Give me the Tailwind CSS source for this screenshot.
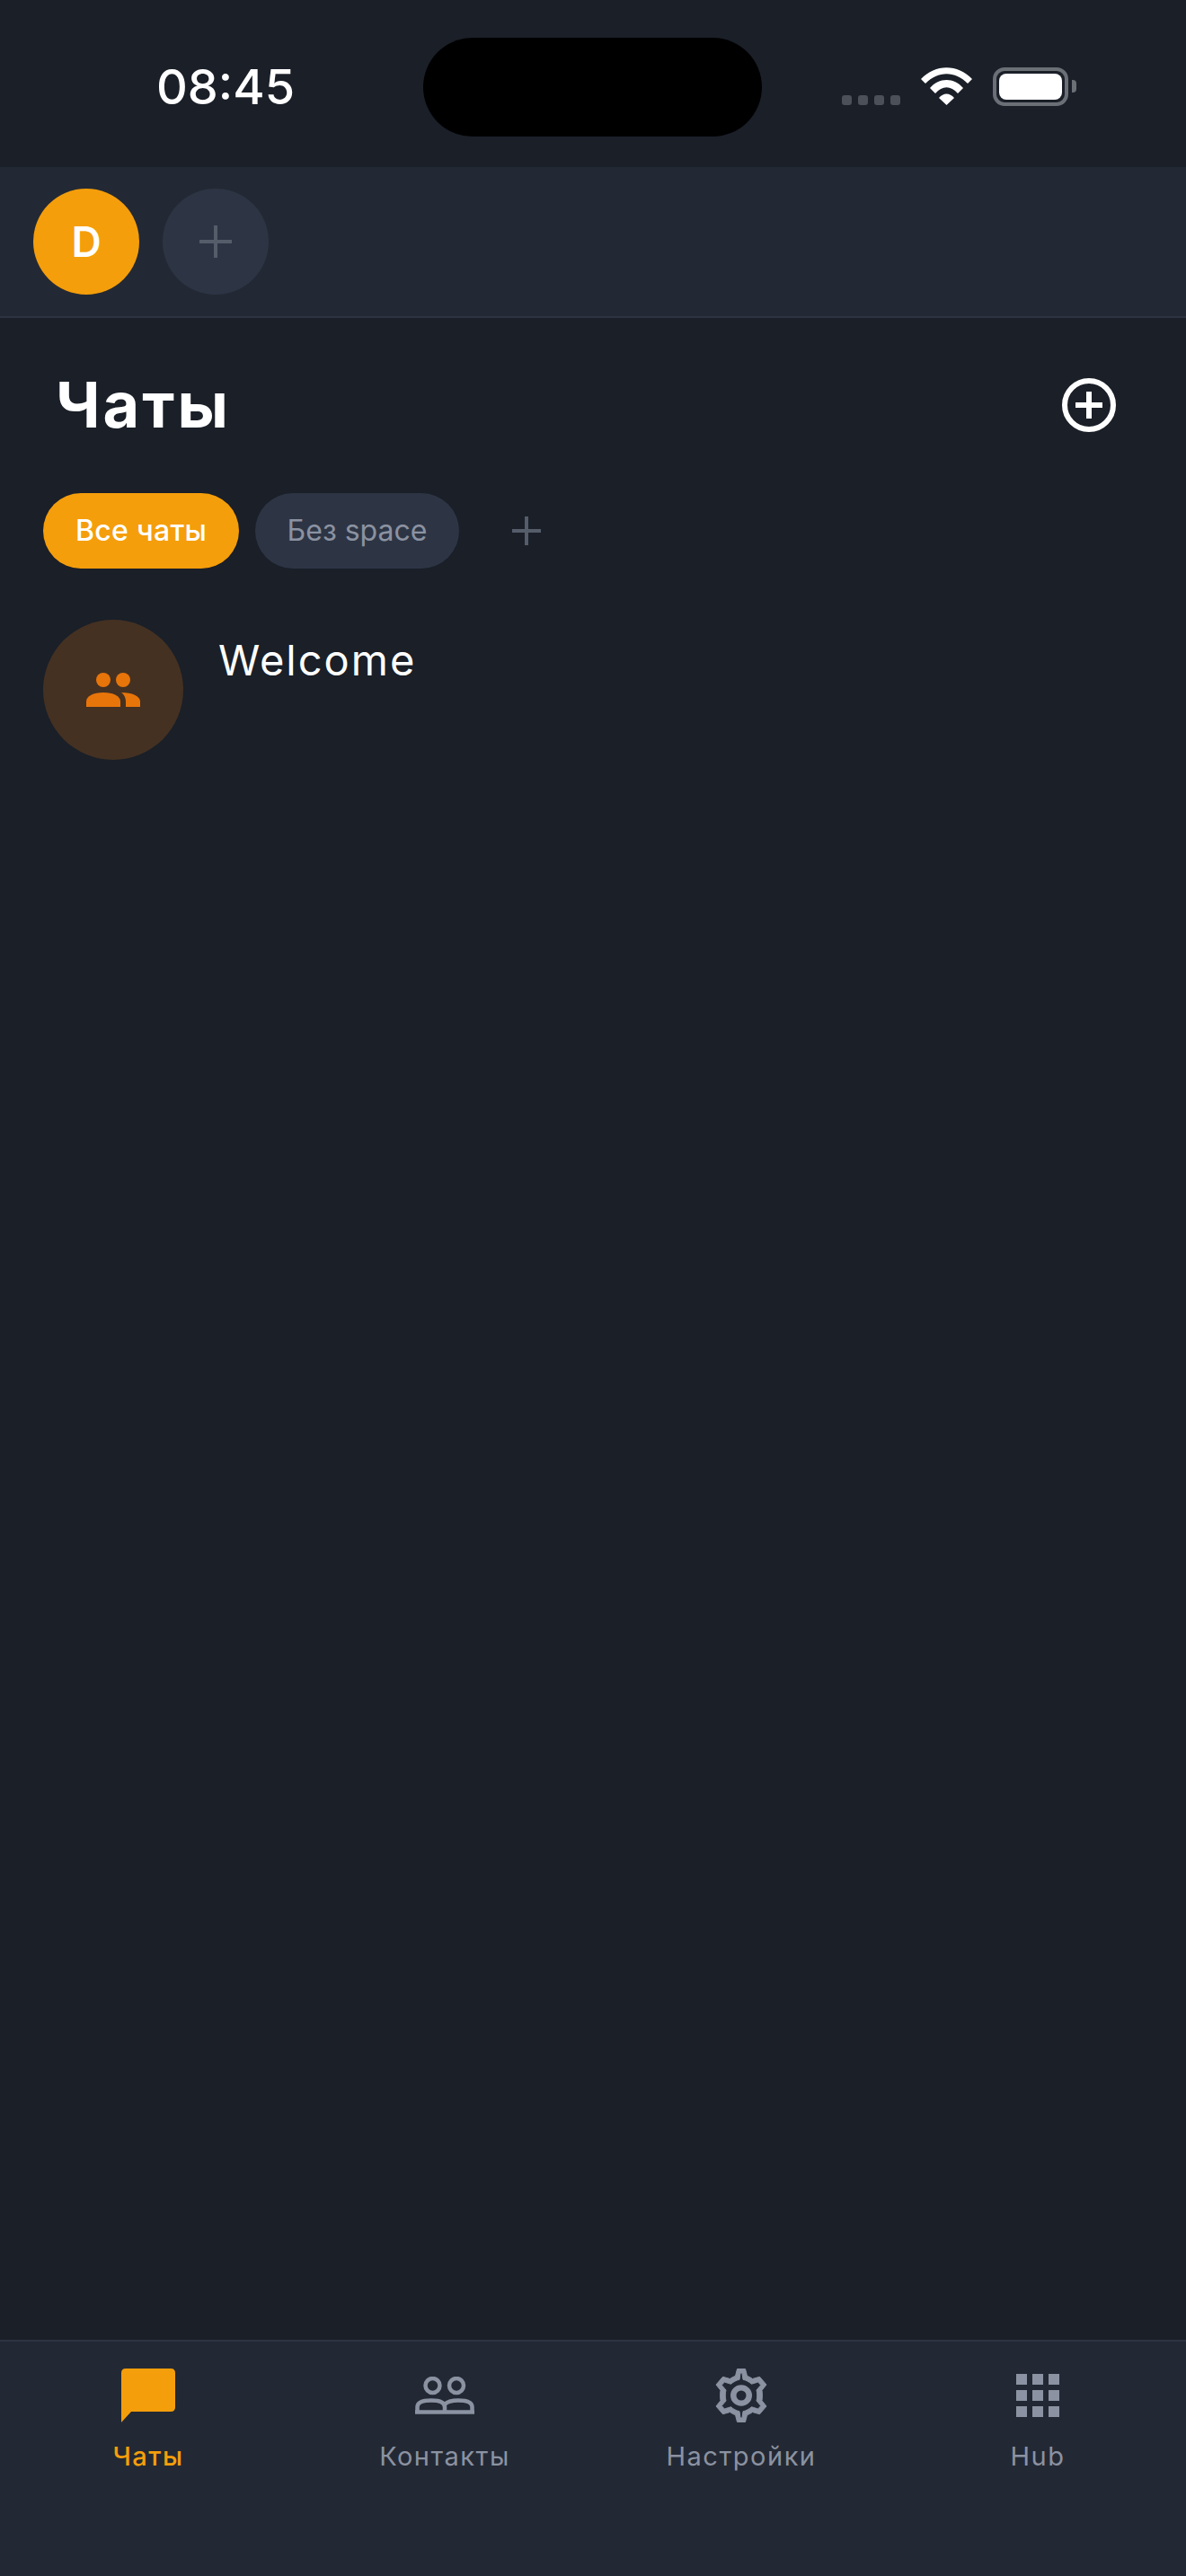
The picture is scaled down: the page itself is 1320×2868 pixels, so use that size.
<!DOCTYPE html>
<html lang="en">

<head>
    <meta charset="UTF-8">
    <meta name="viewport" content="width=device-width, initial-scale=1.0">
    <title>Чаты</title>
    <script src="https://cdn.jsdelivr.net/npm/@tailwindcss/browser@4"></script>
</head>

<body class="bg-[#1a1f28] font-['Inter',sans-serif] overflow-hidden">
    <div class="w-[1320px] h-[2868px] flex flex-col">
        <!--Status bar-->
        <div class="h-[186px] shrink-0 relative">
            <p class="absolute left-[174px] top-[64px] text-[54px] leading-[66px] font-medium text-white">08:45</p>
            <div class="absolute left-[471px] top-[42px] w-[377px] h-[110px] rounded-[55px] bg-black"></div>
            <div class="absolute left-[937px] top-[106px] flex gap-[7px]">
                <div class="w-[11px] h-[11px] rounded-[3px] bg-[#4c5059]"></div>
                <div class="w-[11px] h-[11px] rounded-[3px] bg-[#4c5059]"></div>
                <div class="w-[11px] h-[11px] rounded-[3px] bg-[#4c5059]"></div>
                <div class="w-[11px] h-[11px] rounded-[3px] bg-[#4c5059]"></div>
            </div>
            <svg class="absolute left-[1025px] top-[75px]" width="57" height="42" viewBox="0 0 57 42" fill="#fff">
                <path d="M0 13 C16 -4 41 -4 57 13 L52 18 C38 3.5 19 3.5 5 18 Z" />
                <path d="M10 23 C20 11 37 11 47 23 L41 29 C33 20 24 20 16 29 Z" />
                <path d="M20 34 C25 28 32 28 37 34 L28.5 42 Z" />
            </svg>
            <div class="absolute left-[1105px] top-[75px] w-[84px] h-[43px] rounded-[13px] border-[4px] border-[#6b6f76] p-[3px]">
                <div class="w-full h-full rounded-[8px] bg-white"></div>
            </div>
            <div class="absolute left-[1193px] top-[89px] w-[5px] h-[14px] rounded-r-[4px] bg-[#6b6f76]"></div>
        </div>

        <!--Space switcher-->
        <div class="h-[168px] shrink-0 bg-[#232934] border-b-2 border-[#2d3342] flex items-start gap-[26px] pl-[37px] pt-[24px]">
            <div class="w-[118px] h-[118px] rounded-full bg-[#f59e0b] flex items-center justify-center text-[46px] font-semibold text-white">D</div>
            <div class="w-[118px] h-[118px] rounded-full bg-[#2d3545] flex items-center justify-center">
                <svg width="36" height="36" viewBox="0 0 36 36" fill="#555c6a">
                    <rect x="16" y="0" width="4" height="36" />
                    <rect x="0" y="16" width="36" height="4" />
                </svg>
            </div>
        </div>

        <!--Content-->
        <div class="flex-1 flex flex-col">
            <div class="flex items-center justify-between pl-[62px] pr-[78px] pt-[54px]">
                <h1 class="text-[70px] leading-[85px] tracking-[3px] font-bold text-white">Чаты</h1>
                <svg width="60" height="60" viewBox="0 0 60 60" fill="none" stroke="#fff" stroke-width="6">
                    <circle cx="30" cy="30" r="27" />
                    <path d="M30 15 V45 M15 30 H45" />
                </svg>
            </div>

            <div class="flex items-center pl-[48px] mt-[56px]">
                <div class="w-[218px] h-[84px] rounded-full bg-[#f59e0b] flex items-center justify-center text-[32px] tracking-[0.3px] font-medium text-white">Все чаты</div>
                <div class="w-[227px] h-[84px] ml-[18px] rounded-full bg-[#2d3545] flex items-center justify-center text-[32px] text-[#8b92a1]">Без space</div>
                <svg class="ml-[59px]" width="32" height="32" viewBox="0 0 32 32" fill="#555c6a">
                    <rect x="14" y="0" width="4" height="32" />
                    <rect x="0" y="14" width="32" height="4" />
                </svg>
            </div>

            <div class="flex items-start pl-[48px] mt-[57px]">
                <div class="w-[156px] h-[156px] rounded-full bg-[#443122] flex items-center justify-center">
                    <svg width="60" height="38" viewBox="0 0 60 38" fill="#e8750a">
                        <circle cx="19" cy="8" r="8" />
                        <circle cx="41" cy="8" r="8" />
                        <path d="M0 38 V32 C0 26 8 22 19 22 C30 22 38 26 38 32 V38 Z" />
                        <path d="M39 22 C51 22 60 26 60 32 V38 H44 V32 C44 28 42 24 39 22 Z" />
                    </svg>
                </div>
                <p class="ml-[39px] mt-[16px] text-[47px] leading-[57px] tracking-[2px] text-white">Welcome</p>
            </div>
        </div>

        <!--Bottom nav-->
        <div class="h-[263px] shrink-0 bg-[#232934] border-t-2 border-[#2d3342] grid grid-cols-4 pt-[30px]">
            <div class="flex flex-col items-center">
                <div class="h-[60px] flex items-center">
                    <svg width="60" height="60" viewBox="0 0 60 60" fill="#f59e0b">
                        <path d="M5 0 H55 Q60 0 60 5 V43 Q60 48 55 48 H11 L0 60 V5 Q0 0 5 0 Z" />
                    </svg>
                </div>
                <p class="mt-[20px] text-[29px] leading-[36px] tracking-[1.5px] font-medium text-[#f59e0b]">Чаты</p>
            </div>
            <div class="flex flex-col items-center">
                <div class="h-[60px] flex items-center">
                    <svg width="66" height="42" viewBox="0 0 66 42" fill="none" stroke="#8b92a1" stroke-width="4.5">
                        <circle cx="19.5" cy="10" r="8" />
                        <circle cx="46" cy="10" r="8" />
                        <path d="M2.5 40 V34 C2.5 28 10 26.5 18 26.5 C27 26.5 33 28 33 34 V40 M33 31 C36 27.5 43 26.5 48 26.5 C56 26.5 63.5 28 63.5 34 V40 M0 39.5 H66" />
                    </svg>
                </div>
                <p class="mt-[20px] text-[29px] leading-[36px] tracking-[1.5px] text-[#8b92a1]">Контакты</p>
            </div>
            <div class="flex flex-col items-center">
                <div class="h-[60px] flex items-center">
                    <svg width="60" height="60" viewBox="0 0 24 24" fill="#8b92a1" stroke="#8b92a1" stroke-width="0.4">
                        <path fill-rule="evenodd" d="M10.2 0.2 H13.8 L14.6 3.3 C15.5 3.6 16.3 4.1 17 4.6 L20.2 3.7 L23.2 7.2 L21.2 9.7 C21.4 11 21.4 13 21.2 14.3 L23.2 16.8 L20.2 20.3 L17 19.4 C16.3 19.9 15.5 20.4 14.6 20.7 L13.8 23.8 H10.2 L9.4 20.7 C8.5 20.4 7.7 19.9 7 19.4 L3.8 20.3 L0.8 16.8 L2.8 14.3 C2.6 13 2.6 11 2.8 9.7 L0.8 7.2 L3.8 3.7 L7 4.6 C7.7 4.1 8.5 3.6 9.4 3.3 Z M11.6 2 L11.2 4.9 C9.8 5.2 8.4 6 7.4 6.9 L4.5 6 L3.3 7.4 L5.2 9.6 C4.8 11 4.8 13 5.2 14.4 L3.3 16.6 L4.5 18 L7.4 17.1 C8.4 18 9.8 18.8 11.2 19.1 L11.6 22 H12.4 L12.8 19.1 C14.2 18.8 15.6 18 16.6 17.1 L19.5 18 L20.7 16.6 L18.8 14.4 C19.2 13 19.2 11 18.8 9.6 L20.7 7.4 L19.5 6 L16.6 6.9 C15.6 6 14.2 5.2 12.8 4.9 L12.4 2 Z" />
                        <path fill-rule="evenodd" stroke="none" d="M12 7.3 A4.8 4.7 0 1 1 12 16.7 A4.8 4.7 0 1 1 12 7.3 Z M12 9.8 A2.2 2.2 0 1 0 12 14.2 A2.2 2.2 0 1 0 12 9.8 Z" />
                    </svg>
                </div>
                <p class="mt-[20px] text-[29px] leading-[36px] tracking-[1.5px] text-[#8b92a1]">Настройки</p>
            </div>
            <div class="flex flex-col items-center">
                <div class="h-[60px] flex items-center">
                    <div class="grid grid-cols-3 gap-[6px]">
                        <div class="w-[12px] h-[12px] bg-[#8b92a1]"></div>
                        <div class="w-[12px] h-[12px] bg-[#8b92a1]"></div>
                        <div class="w-[12px] h-[12px] bg-[#8b92a1]"></div>
                        <div class="w-[12px] h-[12px] bg-[#8b92a1]"></div>
                        <div class="w-[12px] h-[12px] bg-[#8b92a1]"></div>
                        <div class="w-[12px] h-[12px] bg-[#8b92a1]"></div>
                        <div class="w-[12px] h-[12px] bg-[#8b92a1]"></div>
                        <div class="w-[12px] h-[12px] bg-[#8b92a1]"></div>
                        <div class="w-[12px] h-[12px] bg-[#8b92a1]"></div>
                    </div>
                </div>
                <p class="mt-[20px] text-[29px] leading-[36px] tracking-[1.5px] text-[#8b92a1]">Hub</p>
            </div>
        </div>
    </div>
</body>

</html>
